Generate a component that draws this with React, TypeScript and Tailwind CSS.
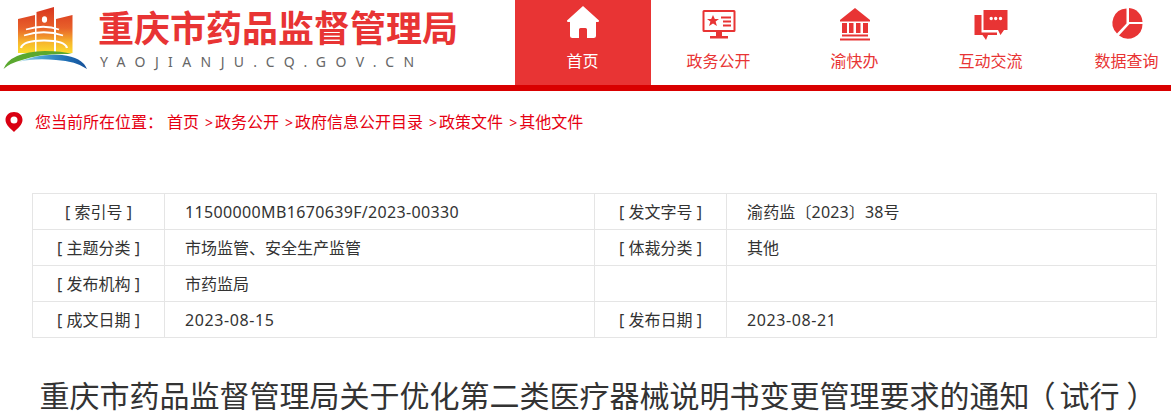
const font = { fontFamily: '"Noto Sans", "Noto Sans CJK SC", sans-serif' };

function Logo() {
  return (
    <svg width="95" height="75" viewBox="0 0 95 75" className="shrink-0">
      <defs>
        <linearGradient id="bld" x1="0" y1="7" x2="0" y2="54" gradientUnits="userSpaceOnUse">
          <stop offset="0" stopColor="#d8351f" />
          <stop offset="0.45" stopColor="#e8612a" />
          <stop offset="0.75" stopColor="#f7b52c" />
          <stop offset="1" stopColor="#fce02e" />
        </linearGradient>
        <linearGradient id="swoosh" x1="18" y1="0" x2="87" y2="0" gradientUnits="userSpaceOnUse">
          <stop offset="0" stopColor="#bfe3ee" />
          <stop offset="0.3" stopColor="#4fa8d8" />
          <stop offset="0.7" stopColor="#1f6fb5" />
          <stop offset="1" stopColor="#154f98" />
        </linearGradient>
      </defs>
      <path d="M18 19 L35 15 V53 H18 Z" fill="url(#bld)" />
      <path d="M36.5 12 L54 7 V52 H36.5 Z" fill="url(#bld)" />
      <path d="M56 19 L72.500 15 V53 H56 Z" fill="url(#bld)" />
      <ellipse cx="44.500" cy="19.500" rx="2.600" ry="3.200" fill="#fff" />
      <path d="M26 29.500 Q44 24 59 29.500" stroke="#fff" strokeWidth="1.800" fill="none" />
      <path d="M24 35.500 Q44 29 63 35.500" stroke="#fff" strokeWidth="1.800" fill="none" />
      <path d="M21 48 Q23 40.500 44 40.500 Q65 40.500 67 48" stroke="#fff" strokeWidth="2.200" fill="none" />
      <path d="M3.500 69 Q10 52 45 51 Q62 51 72 54 Q40 53 22 60 Q10 63 3.500 69 Z" fill="#5aa82f" />
      <path d="M18 62 Q40 53 62 55 Q82 57 87 69 Q76 61 56 60 Q34 58 18 62 Z" fill="url(#swoosh)" />
    </svg>
  );
}

function NavIcon({ name }: { name: string }) {
  const fill = name === "home" ? "#fff" : "#e83434";
  return (
    <svg width="40" height="40" viewBox="0 0 40 40" fill={fill}>
      {name === "home" && (
        <path d="M20 3 L36 17.500 Q36.500 19 34.500 19 H33 V32.500 Q33 35 30.500 35 H24 V26.500 Q24 25 22.500 25 H17.500 Q16 25 16 26.500 V35 H9.500 Q7 35 7 32.500 V19 H5.500 Q3.500 19 4 17.500 Z" />
      )}
      {name === "gov" && (
        <>
          <path fillRule="evenodd" d="M5 7 H35 Q36.500 7 36.500 8.500 V27.500 Q36.500 29 35 29 H5 Q3.500 29 3.500 27.500 V8.500 Q3.500 7 5 7 Z M5.500 9 V27 H34.500 V9 Z" />
          <path d="M17 29 H23 V33 H29 V35.500 H11 V33 H17 Z" />
          <path d="M14 12 L15.800 16 H20 L16.600 18.600 L17.900 23 L14 20.400 L10.100 23 L11.400 18.600 L8 16 H12.200 Z" />
          <path d="M22 13.500 H32 V15.500 H22 Z M24 17.500 H32 V19.500 H24 Z M24 21.500 H32 V23.500 H24 Z" />
        </>
      )}
      {name === "bank" && (
        <>
          <path d="M20 5 L35 17 V18.500 H5 V17 Z" />
          <path d="M7 20 H12 V30 H7 Z M14 20 H18.500 V30 H14 Z M21 20 H25.500 V30 H21 Z M28 20 H33 V30 H28 Z" />
          <path d="M7 31.500 H33 V33.500 H7 Z M5 35.500 H35 V37.500 H5 Z" />
        </>
      )}
      {name === "chat" && (
        <>
          <path fillRule="evenodd" d="M12.500 7 H36.500 V27 H33 L29.500 32 L27 27 H12.500 Z M18.500 15.500 a1.700 1.700 0 1 0 3.400 0 a1.700 1.700 0 1 0 -3.400 0 Z M23 15.500 a1.700 1.700 0 1 0 3.400 0 a1.700 1.700 0 1 0 -3.400 0 Z M27.800 15.500 a1.700 1.700 0 1 0 3.400 0 a1.700 1.700 0 1 0 -3.400 0 Z" />
          <path d="M3.500 12 H10.500 V29.500 H26 V32 H17 L15 37 L11.500 32 H3.500 Z" />
        </>
      )}
      {name === "pie" && (
        <>
          <path d="M20 6 V21 L10.500 31 A14.500 14.500 0 0 1 20 6 Z" transform="translate(-0.500 -0.500)" />
          <path d="M22 5 A14.500 14.500 0 0 1 35.500 19 H22 Z" />
          <path d="M22.500 21 H35.500 A14.500 14.500 0 0 1 12 32.500 Z" />
        </>
      )}
    </svg>
  );
}

const navItems = [
  { name: "home", label: "首页" },
  { name: "gov", label: "政务公开" },
  { name: "bank", label: "渝快办" },
  { name: "chat", label: "互动交流" },
  { name: "pie", label: "数据查询" },
];

const crumbs = ["政务公开", "政府信息公开目录", "政策文件", "其他文件"];

const rows = [
  ["[ 索引号 ]", "11500000MB1670639F/2023-00330", "[ 发文字号 ]", "渝药监〔2023〕38号"],
  ["[ 主题分类 ]", "市场监管、安全生产监管", "[ 体裁分类 ]", "其他"],
  ["[ 发布机构 ]", "市药监局", "", ""],
  ["[ 成文日期 ]", "2023-08-15", "[ 发布日期 ]", "2023-08-21"],
];

// digits in the reference run wider than Noto's, so number cells get a little tracking
function valueTracking(text: string) {
  if (/^\d{4}-\d{2}-\d{2}$/.test(text)) return "tracking-[0.6px]";
  if (/^\d+MB/.test(text)) return "tracking-[0.35px]";
  if (text.includes("2023")) return "tracking-[0.15px]";
  return "";
}

export default function App() {
  return (
    <div className="h-screen overflow-hidden bg-white" style={font}>
      <header className="flex h-[85px] overflow-hidden">
        <div className="flex w-[515px] shrink-0">
          <Logo />
          <div className="ml-[3px]">
            <div className="mt-[4px] text-[36px] font-bold leading-[50px] text-[#e83434]">重庆市药品监督管理局</div>
            <div className="ml-[2px] text-[14px] leading-[16px] tracking-[9.4px] text-[#666]">YAOJIANJU.CQ.GOV.CN</div>
          </div>
        </div>
        {navItems.map((item, i) => (
          <div
            key={item.name}
            className={
              i === 0
                ? "flex w-[136px] shrink-0 flex-col items-center bg-[#e83434] pt-[3px] text-white"
                : "flex w-[136px] shrink-0 flex-col items-center pt-[3px] text-[#e83434]"
            }
          >
            <NavIcon name={item.name} />
            <div className="mr-[1px] mt-[7px] text-[16px] leading-[22px]">{item.label}</div>
          </div>
        ))}
      </header>
      <div className="h-[6px] bg-[#d90000]" />

      <div className="flex h-[62px] items-center pl-[5px] text-[16px] text-[#e60012]">
        <svg width="18" height="20" viewBox="0 0 18 20" className="shrink-0">
          <path
            fillRule="evenodd"
            d="M9 0 C4 0 .5 3.500 .5 8 C.5 13 6 17 9 20 C12 17 17.500 13 17.500 8 C17.500 3.500 14 0 9 0 Z M9 4.500 A3.500 3.500 0 1 1 9 11.500 A3.500 3.500 0 1 1 9 4.500 Z"
            fill="#d90012"
          />
        </svg>
        <span className="ml-[12px]">您当前所在位置：</span>
        <span className="ml-[4px]">首页</span>
        {crumbs.map((c) => (
          <span key={c} className="ml-[6px]">
            <span className="mr-[2px] text-[14px]">&gt;</span>
            {c}
          </span>
        ))}
      </div>

      <div className="ml-[32px] mt-[40px] w-[1125px] border-l border-t border-[#e5e5e5] text-[16px] text-[#333]">
        {rows.map((row) => (
          <div key={row[0]} className="grid h-[36px] grid-cols-[132px_430px_132px_430px]">
            {row.map((cell, i) => (
              <div
                key={i}
                className={
                  i % 2 === 0
                    ? "flex items-center justify-center border-b border-r border-[#e5e5e5]"
                    : "flex items-center border-b border-r border-[#e5e5e5] pl-[20px]"
                }
              >
                <span className={valueTracking(cell)}>{cell}</span>
              </div>
            ))}
          </div>
        ))}
      </div>

      <h1 className="ml-[32px] mt-[36px] w-[1125px] text-center text-[30px] font-normal leading-[44px] text-[#333]">
        重庆市药品监督管理局关于优化第二类医疗器械说明书变更管理要求的通知
        <span className="-ml-[4px] mr-[4px]">（</span>试行<span className="-mr-[7px] ml-[7px]">）</span>
      </h1>
    </div>
  );
}
